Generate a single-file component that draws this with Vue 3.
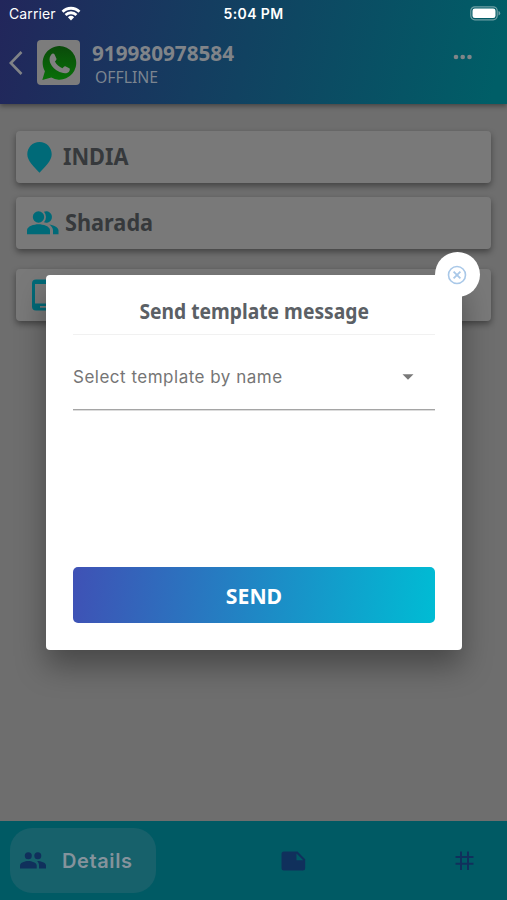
<script setup>
import { ref } from 'vue'

const phone = ref('919980978584')
const status = ref('OFFLINE')
const open = ref(true)
</script>

<template>
  <div class="screen">
    <header class="header">
      <div class="status-bar">
        <div class="carrier">
          <span>Carrier</span>
          <svg width="20" height="15" viewBox="0 0 20 15" fill="#fff">
            <path d="M10 14.4 6.9 11.2a4.5 4.5 0 0 1 6.2 0z" />
            <path d="M3.6 7.9a9 9 0 0 1 12.8 0l-1.9 2.1a6.4 6.4 0 0 0-9 0z" />
            <path d="M.6 4.700a13.300 13.300 0 0 1 18.800 0l-1.900 2.100a10.600 10.600 0 0 0-15 0z" />
          </svg>
        </div>
        <div class="clock">5:04 PM</div>
        <div class="battery">
          <svg width="31" height="15" viewBox="0 0 31 15">
            <rect x=".8" y=".8" width="26.4" height="13" rx="4" fill="none" stroke="#6fa0a5" stroke-width="1.2" />
            <rect x="2.5" y="2.5" width="23" height="9.6" rx="2.3" fill="#fff" />
            <path d="M28.5 5v4.6q1.7-.6 1.7-2.3T28.5 5z" fill="#6fa0a5" />
          </svg>
        </div>
      </div>
      <div class="contact">
        <svg class="back" width="14" height="24" viewBox="0 0 14 24">
          <path d="M12.5 1 1.8 12l10.700 11" fill="none" stroke="#808387" stroke-width="2.6" />
        </svg>
        <div class="avatar">
          <svg width="36" height="36" viewBox="0 0 36 36">
            <defs>
              <linearGradient id="wa" x1="0" y1="0" x2="0" y2="1">
                <stop offset="0" stop-color="#0a4a0a" />
                <stop offset="1" stop-color="#087008" />
              </linearGradient>
            </defs>
            <path d="M18.3 1.1a16.800 16.800 0 1 1-8 31.500L1.300 35l2.600-8.700A16.800 16.800 0 0 1 18.300 1.100z" fill="url(#wa)" />
            <path d="M10.500 9.300c1-1.100 2.600-.8 3.100.3l1.900 4.200c.3.900-1 2-1.600 2.800 1.600 3.200 4.200 5.400 7.500 6.700.9-.9 1.900-2.400 2.900-2l4 2c1 .5.500 2.500-.5 3.600-2.500 2.300-7.200 1.300-11-.9-3.600-2.100-7-5.700-8-9.600-.7-2.800.2-5.500 1.700-7.100z" fill="#808080" />
          </svg>
        </div>
        <div class="who">
          <div class="phone">{{ phone }}</div>
          <div class="state">{{ status }}</div>
        </div>
        <svg class="more" width="20" height="6" viewBox="0 0 20 6" fill="#808588">
          <circle cx="3" cy="3" r="2.300" />
          <circle cx="9.700" cy="3" r="2.300" />
          <circle cx="16.500" cy="3" r="2.300" />
        </svg>
      </div>
    </header>

    <main class="content">
      <div class="card">
        <svg class="pin" width="25" height="31" viewBox="0 0 25 31">
          <path d="M12.500 0C5.500 0 .3 5.500.3 12.300c0 6.500 6.700 12.700 12.200 18.500 5.500-5.800 12.200-12 12.200-18.500C24.700 5.500 19.500 0 12.500 0z" fill="#006a78" />
        </svg>
        <span class="label country">INDIA</span>
      </div>
      <div class="card">
        <svg class="people" width="32" height="24" viewBox="0 0 32 24" fill="#006a78">
          <circle cx="11.500" cy="6" r="5.700" />
          <path d="M17 .8a5.700 5.700 0 1 1 0 10.500 8 8 0 0 0 0-10.500z" />
          <path d="M0 23.300v-4c0-4 7-6 11.500-6s11.500 2 11.500 6v4z" />
          <path d="M22.300 13.500c4 .5 9.200 2.600 9.200 6v3.800h-5.500v-3.800c0-2.500-1.500-4.500-3.700-6z" />
        </svg>
        <span class="label name">Sharada</span>
      </div>
      <div class="card last">
        <svg class="mobile" width="22" height="32" viewBox="0 0 22 32">
          <path fill-rule="evenodd" d="M4 .5h14a4 4 0 0 1 4 4v23a4 4 0 0 1-4 4H4a4 4 0 0 1-4-4v-23a4 4 0 0 1 4-4zM3 5v19.500h16V5zM8 27v1.700h6V27z" fill="#006a78" />
        </svg>
      </div>
    </main>

    <nav class="tabs">
      <div class="tab active">
        <svg width="26" height="17" viewBox="0 0 26 17" fill="#10305c">
          <circle cx="8.300" cy="3.700" r="3.500" />
          <circle cx="17.800" cy="3.700" r="3.500" />
          <path d="M0 16.500v-3C0 10.500 5 9 8.300 9s8.400 1.500 8.400 4.500v3z" />
          <path d="M17 9c4 0 9 1.600 9 4.500v3h-7v-3C19 11.500 18.200 10 17 9z" />
        </svg>
        <span>Details</span>
      </div>
      <svg class="note" width="25" height="20" viewBox="0 0 25 20">
        <path fill-rule="evenodd" d="M3 .5h13.500l7.700 7.700V17a2.500 2.500 0 0 1-2.500 2.500H3A2.500 2.500 0 0 1 .5 17V3A2.500 2.500 0 0 1 3 .5zM15.500 2.500v6.700h6.700z" fill="#10305c" />
      </svg>
      <svg class="hash" width="19" height="20" viewBox="0 0 19 20">
        <path d="M6 .5v18.500M13 .5v18.500M.5 6h18M.5 12.700h18" fill="none" stroke="#10305c" stroke-width="2" />
      </svg>
    </nav>

    <div v-if="open" class="modal">
      <button class="close" @click="open = false">
        <svg width="20" height="20" viewBox="0 0 20 20" fill="none" stroke="#a9c8e8">
          <circle cx="10" cy="10" r="8.500" stroke-width="1.600" />
          <path d="m6.600 6.600 6.800 6.800m0-6.800-6.800 6.800" stroke-width="1.800" />
        </svg>
      </button>
      <h2 class="title"><span>Send template message</span></h2>
      <div class="select">
        <span>Select template by name</span>
        <svg width="12" height="6" viewBox="0 0 12 6"><path d="M.5.300h11L6 5.800z" fill="#797979" /></svg>
      </div>
      <button class="send">SEND</button>
    </div>
  </div>
</template>

<style>
body {
  margin: 0;
}
</style>

<style scoped>
.screen {
  position: relative;
  display: flex;
  flex-direction: column;
  width: 507px;
  height: 900px;
  overflow: hidden;
  background: #6e6e6e;
  font-family: "Noto Sans", sans-serif;
}
.header {
  height: 104px;
  background: linear-gradient(102deg, #22265b 0%, #005e67 97%);
  box-shadow: 0 2px 5px rgba(0, 0, 0, 0.4);
}
.status-bar {
  display: grid;
  grid-template-columns: 1fr 1fr 1fr;
  align-items: center;
  height: 27px;
  padding: 0 6px 0 9px;
  color: #fff;
  font: 500 14px/27px Inter, sans-serif;
}
.carrier {
  display: flex;
  align-items: center;
  gap: 5px;
  font-weight: 400;
  letter-spacing: 0.1px;
}
.clock {
  padding-right: 3px;
  text-align: center;
  font-weight: 600;
  letter-spacing: 0.4px;
}
.battery {
  display: flex;
  justify-content: flex-end;
}
.contact {
  display: flex;
  align-items: center;
  height: 71px;
  padding: 0 34px 0 9px;
}
.avatar {
  display: flex;
  align-items: center;
  justify-content: center;
  width: 43px;
  height: 45px;
  margin-left: 14px;
  border-radius: 4px;
  background: #7c7c7c;
}
.who {
  flex: 1;
  margin-left: 12px;
  padding-top: 2px;
}
.phone {
  color: #808489;
  font-size: 20.7px;
  line-height: 26px;
  font-weight: 700;
}
.state {
  margin-left: 3px;
  color: #7c8590;
  font-size: 15.8px;
  line-height: 22px;
}
.more {
  margin-top: -11px;
}
.content {
  flex: 1;
  padding: 27px 16px 0;
}
.card {
  display: flex;
  align-items: center;
  height: 52px;
  margin-bottom: 14px;
  padding-left: 11px;
  border-radius: 4px;
  background: #797979;
  box-shadow: 0 3px 6px rgba(0, 0, 0, 0.4);
  color: #36393c;
  font-size: 24px;
  font-weight: 700;
}
.card.last {
  margin-top: 20px;
  padding-left: 16px;
}
.label {
  margin-top: -3px;
  transform: scaleX(0.905);
  transform-origin: left;
}
.country {
  margin-left: 11px;
}
.name {
  margin-left: 6px;
}
.tabs {
  display: flex;
  align-items: center;
  height: 79px;
  padding: 0 33px 0 10px;
  background: #005a64;
}
.tab.active {
  display: flex;
  align-items: center;
  gap: 16px;
  width: 136px;
  height: 65px;
  margin-top: -1px;
  padding-left: 10px;
  border-radius: 22px;
  background: #17616b;
  color: #85939c;
  font: 600 20px Inter, sans-serif;
  letter-spacing: 0.6px;
}
.tab.active span {
  padding-top: 1px;
}
.note {
  margin: 0 auto 0 125px;
}
.modal {
  position: absolute;
  top: 275px;
  left: 46px;
  display: flex;
  flex-direction: column;
  box-sizing: border-box;
  width: 416px;
  height: 375px;
  padding: 0 27px 27px;
  border-radius: 4px;
  background: #fff;
  box-shadow: 0 16px 30px rgba(0, 0, 0, 0.35);
}
.close {
  position: absolute;
  top: -23px;
  right: -18px;
  display: flex;
  align-items: center;
  justify-content: center;
  width: 45px;
  height: 45px;
  padding: 0 1px 0 0;
  border: 0;
  border-radius: 50%;
  background: #fff;
}
.title {
  height: 38px;
  margin: 0;
  padding-top: 21px;
  border-bottom: 1px solid #f1f1f1;
  color: #5b6065;
  font-size: 21px;
  line-height: 30px;
  font-weight: 700;
  text-align: center;
}
.title span {
  display: inline-block;
  transform: scaleX(0.917);
}
.select {
  display: flex;
  align-items: center;
  justify-content: space-between;
  height: 74px;
  padding-right: 21px;
  border-bottom: 1px solid #a5a5a5;
  box-shadow: 0 1px 0 #dcdcdc;
  color: #757575;
  font: 400 17px Inter, sans-serif;
  letter-spacing: 0.5px;
}
.select span {
  padding-top: 10px;
}
.select svg {
  margin-top: 10px;
}
.send {
  height: 56px;
  margin-top: auto;
  border: 0;
  border-radius: 5px;
  background: linear-gradient(96deg, #3f51b5, #00bcd4);
  color: #fff;
  font: 700 21.2px "Noto Sans", sans-serif;
}
</style>
